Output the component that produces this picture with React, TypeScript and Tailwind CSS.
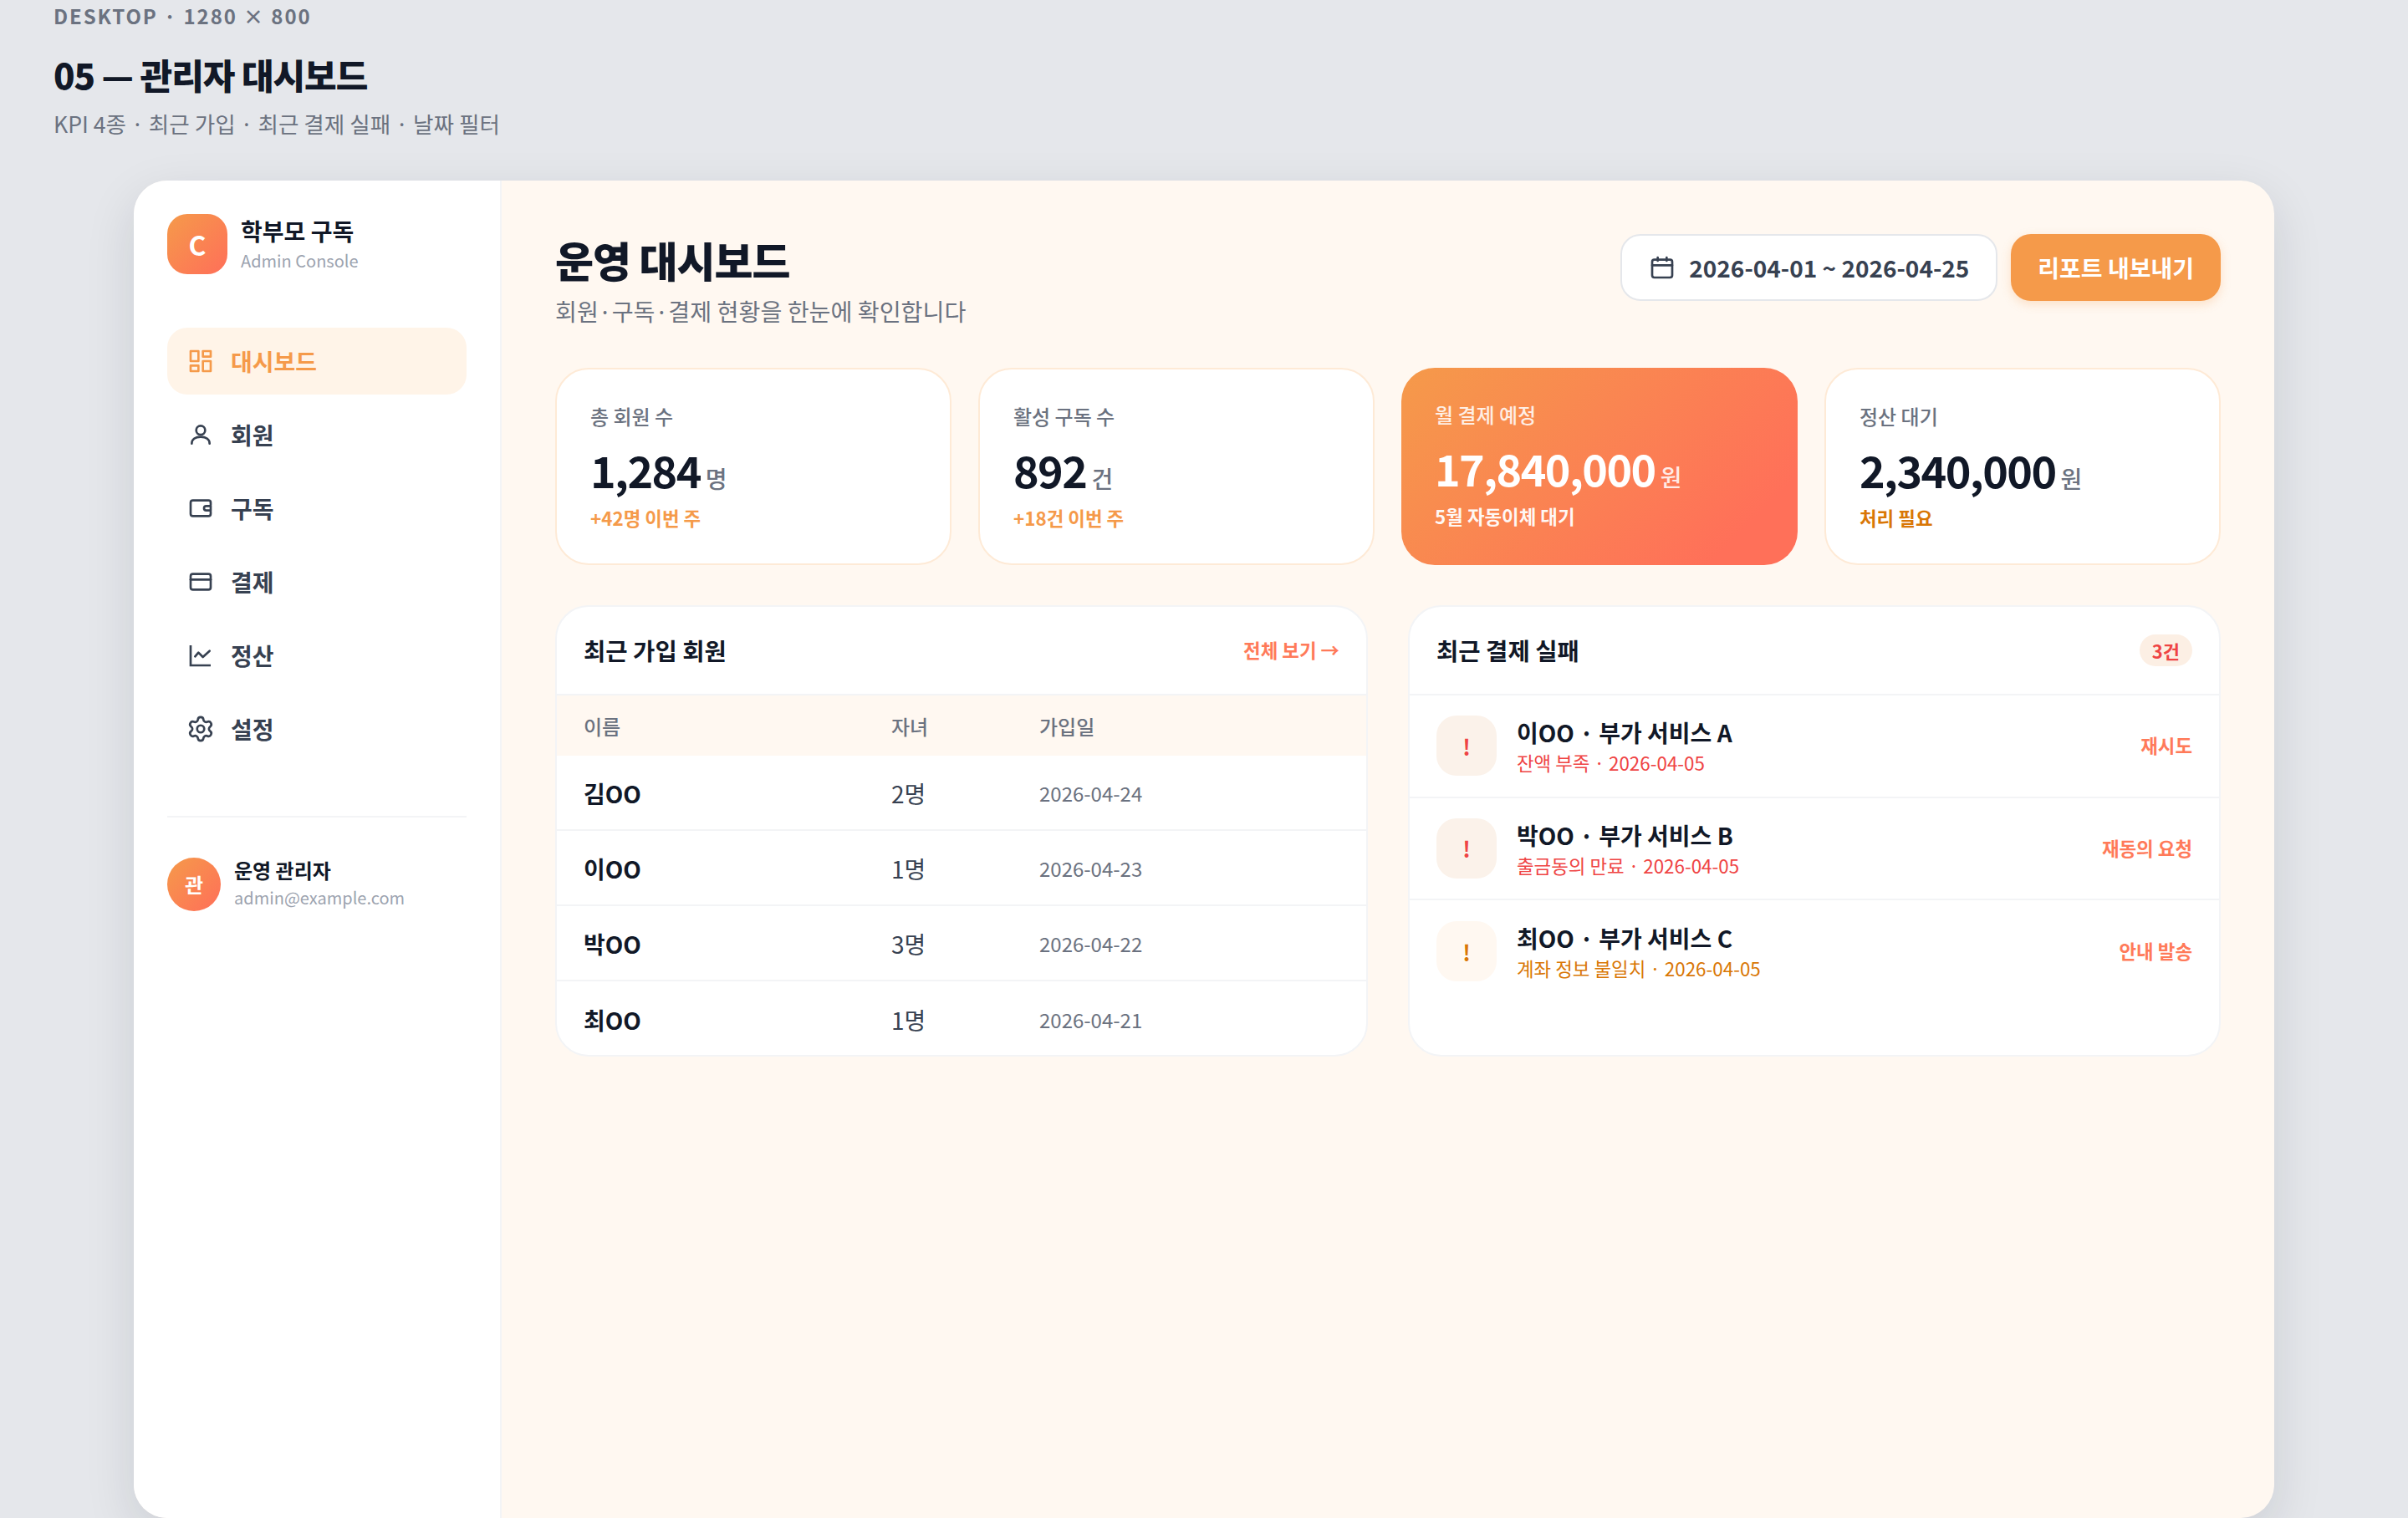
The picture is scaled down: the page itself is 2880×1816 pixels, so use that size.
import { Settings } from 'lucide-react';

const SW = 2;

function IconBase({ children, className = '' }: { children: React.ReactNode; className?: string }) {
  return (
    <svg
      viewBox="0 0 24 24"
      fill="none"
      stroke="currentColor"
      strokeWidth={SW}
      strokeLinecap="round"
      strokeLinejoin="round"
      className={`h-8 w-8 shrink-0 ${className}`}
    >
      {children}
    </svg>
  );
}

const DashboardIcon = () => (
  <IconBase>
    <rect x="3" y="3" width="7" height="9" />
    <rect x="14" y="3" width="7" height="5" />
    <rect x="14" y="12" width="7" height="9" />
    <rect x="3" y="16" width="7" height="5" />
  </IconBase>
);

const UserIcon = () => (
  <IconBase>
    <circle cx="12" cy="8" r="4" />
    <path d="M4 20c0-4 3.6-6 8-6s8 2 8 6" />
  </IconBase>
);

const WalletIcon = () => (
  <IconBase>
    <path d="M21 9V7a2 2 0 0 0-2-2H5a2 2 0 0 0-2 2v10a2 2 0 0 0 2 2h14a2 2 0 0 0 2-2v-2" />
    <path d="M21 10h-4a2 2 0 0 0 0 4h4z" />
  </IconBase>
);

const CardIcon = () => (
  <IconBase>
    <rect x="3" y="5" width="18" height="14" rx="2" />
    <path d="M3 10h18" />
  </IconBase>
);

const ChartIcon = () => (
  <IconBase>
    <path d="M3 3v18h18" strokeLinecap="butt" strokeLinejoin="miter" />
    <path d="M7 13l3-3.5 4 4 6-5.5" />
  </IconBase>
);

const CalendarIcon = () => (
  <IconBase className="text-[#374151]">
    <rect x="3" y="5" width="18" height="16" rx="2" />
    <path d="M3 10h18M8 3v3M16 3v3" />
  </IconBase>
);

const navItems = [
  { label: '대시보드', icon: <DashboardIcon />, active: true },
  { label: '회원', icon: <UserIcon /> },
  { label: '구독', icon: <WalletIcon /> },
  { label: '결제', icon: <CardIcon /> },
  { label: '정산', icon: <ChartIcon /> },
  { label: '설정', icon: <Settings size={34} strokeWidth={1.9} className="-mx-px shrink-0" /> },
];

const kpis = [
  { label: '총 회원 수', value: '1,284', unit: '명', note: '+42명 이번 주', noteColor: 'text-[#f59a4a]' },
  { label: '활성 구독 수', value: '892', unit: '건', note: '+18건 이번 주', noteColor: 'text-[#f59a4a]' },
  { label: '월 결제 예정', value: '17,840,000', unit: '원', note: '5월 자동이체 대기', highlight: true },
  { label: '정산 대기', value: '2,340,000', unit: '원', note: '처리 필요', noteColor: 'text-[#d97706]' },
];

const members = [
  { name: '김OO', kids: '2명', date: '2026-04-24' },
  { name: '이OO', kids: '1명', date: '2026-04-23' },
  { name: '박OO', kids: '3명', date: '2026-04-22' },
  { name: '최OO', kids: '1명', date: '2026-04-21' },
];

const failures = [
  { title: '이OO · 부가 서비스 A', reason: '잔액 부족 · 2026-04-05', action: '재시도', tone: 'text-[#ef4444]', iconBg: 'bg-[#fbf2ea]' },
  { title: '박OO · 부가 서비스 B', reason: '출금동의 만료 · 2026-04-05', action: '재동의 요청', tone: 'text-[#ef4444]', iconBg: 'bg-[#fbf2ea]' },
  { title: '최OO · 부가 서비스 C', reason: '계좌 정보 불일치 · 2026-04-05', action: '안내 발송', tone: 'text-[#d97706]', iconBg: 'bg-[#fff8f1]' },
];

function Sidebar() {
  return (
    <aside className="flex w-[440px] shrink-0 flex-col border-r-2 border-[#f3f4f6] bg-white px-10 pt-10">
      <div className="flex items-center gap-4">
        <div className="flex h-[72px] w-[72px] items-center justify-center rounded-[24px] bg-[linear-gradient(135deg,#f59a4a,#ff6f59)] text-[32px] font-bold text-white">
          C
        </div>
        <div>
          <div className="mb-1 text-[28px] leading-[36px] font-bold text-[#111827]">학부모 구독</div>
          <div className="text-[20px] leading-[28px] text-[#9ca3af]">Admin Console</div>
        </div>
      </div>

      <nav className="mt-16 flex flex-col gap-2">
        {navItems.map((item) => (
          <div
            key={item.label}
            className={`flex h-20 items-center gap-5 rounded-[24px] px-6 text-[28px] font-semibold ${
              item.active ? 'bg-[#fff4e8] text-[#f59a4a]' : 'text-[#374151]'
            }`}
          >
            {item.icon}
            {item.label}
          </div>
        ))}
      </nav>

      <div className="mt-16 flex items-center gap-4 border-t-2 border-[#f3f4f6] pt-12">
        <div className="flex h-16 w-16 items-center justify-center rounded-full bg-[linear-gradient(135deg,#f59a4a,#ff6f59)] text-[24px] font-bold text-white">
          관
        </div>
        <div>
          <div className="mb-1 text-[24px] leading-[28px] font-semibold text-[#111827]">운영 관리자</div>
          <div className="text-[20px] leading-[30px] text-[#9ca3af]">admin@example.com</div>
        </div>
      </div>
    </aside>
  );
}

function KpiCard({ kpi }: { kpi: (typeof kpis)[number] }) {
  const hi = kpi.highlight;
  return (
    <div
      className={`h-[236px] rounded-[40px] px-10 pt-[38px] ${
        hi ? 'bg-[linear-gradient(135deg,#f59a4a,#ff7059_85%)]' : 'border-2 border-[#feead6] bg-white'
      }`}
    >
      <div className={`text-[24px] leading-[36px] font-medium ${hi ? 'text-white/85' : 'text-[#6b7280]'}`}>{kpi.label}</div>
      <div className="mt-[10px] flex items-baseline gap-[6px]">
        <span className={`text-[52px] leading-[72px] font-bold tracking-[-0.03em] ${hi ? 'text-white' : 'text-[#111827]'}`}>{kpi.value}</span>
        <span className={`text-[28px] font-medium ${hi ? 'text-white/85' : 'text-[#6b7280]'}`}>{kpi.unit}</span>
      </div>
      <div className={`mt-1 text-[22.4px] leading-[34px] font-semibold ${hi ? 'text-white/95' : kpi.noteColor}`}>{kpi.note}</div>
    </div>
  );
}

function MembersCard() {
  return (
    <section className="h-[540px] overflow-hidden rounded-[40px] border-2 border-[#f3f4f6] bg-white">
      <header className="flex h-[106px] items-center justify-between border-b-2 border-[#f3f4f6] px-8">
        <h2 className="text-[28.6px] font-bold text-[#111827]">최근 가입 회원</h2>
        <a className="text-[22.4px] font-semibold text-[#ff7a59]">전체 보기 →</a>
      </header>
      <div className="grid h-[72px] grid-cols-[368px_177px_1fr] items-center bg-[#fff8f1] pt-[2px] text-[24px] font-medium text-[#6b7280]">
        <div className="px-8">이름</div>
        <div className="px-8">자녀</div>
        <div className="px-8">가입일</div>
      </div>
      {members.map((m) => (
        <div key={m.name} className="grid h-[90px] grid-cols-[368px_177px_1fr] items-center border-b-2 border-[#f3f4f6] pt-[2px] last:border-b-0">
          <div className="px-8 text-[28px] font-semibold text-[#111827]">{m.name}</div>
          <div className="px-8 text-[28px] text-[#374151]">{m.kids}</div>
          <div className="px-8 text-[24px] text-[#6b7280]">{m.date}</div>
        </div>
      ))}
    </section>
  );
}

function FailuresCard() {
  return (
    <section className="h-[540px] overflow-hidden rounded-[40px] border-2 border-[#f3f4f6] bg-white">
      <header className="flex h-[106px] items-center justify-between border-b-2 border-[#f3f4f6] px-8">
        <h2 className="text-[28.6px] font-bold text-[#111827]">최근 결제 실패</h2>
        <span className="flex h-[38px] items-center rounded-full bg-[#fcefe4] px-[15px] text-[22px] font-bold text-[#ef4444]">3건</span>
      </header>
      {failures.map((f) => (
        <div key={f.title} className="flex h-[122.5px] items-center gap-6 border-b-2 border-[#f3f4f6] px-8 last:border-b-0">
          <div className={`flex h-[72px] w-[72px] shrink-0 items-center justify-center rounded-[24px] text-[26px] font-bold ${f.iconBg} ${f.tone}`}>!</div>
          <div className="min-w-0 flex-1">
            <div className="text-[28px] leading-[40px] font-semibold text-[#111827]">{f.title}</div>
            <div className={`text-[22.4px] leading-[32px] ${f.tone}`}>{f.reason}</div>
          </div>
          <a className="text-[22.4px] font-semibold text-[#ff7a59]">{f.action}</a>
        </div>
      ))}
    </section>
  );
}

export default function App() {
  return (
    <div className="h-[1816px] overflow-hidden bg-[#e5e7eb] font-['Noto_Sans_CJK_KR','Noto_Sans',sans-serif]">
      <div className="pl-16">
        <div className="text-[24px] leading-[38px] font-semibold tracking-[1.9px] text-[#6b7280]">DESKTOP · 1280 × 800</div>
        <h1 className="mt-[22px] text-[42px] leading-[58px] font-extrabold tracking-[-0.025em] text-[#111827]">05 — 관리자 대시보드</h1>
        <p className="mt-[10px] text-[26.6px] leading-[40px] text-[#6b7280]">KPI 4종 · 최근 가입 · 최근 결제 실패 · 날짜 필터</p>
      </div>

      <div className="mx-auto mt-12 flex h-[1600px] w-[2560px] overflow-hidden rounded-[40px] bg-[#fff8f1] shadow-[0_20px_60px_rgba(17,24,39,0.12)]">
        <Sidebar />
        <main className="min-w-0 flex-1 px-16 pt-16">
          <div className="flex items-start justify-between">
            <div>
              <h2 className="mt-[-6px] mb-[6px] text-[50px] leading-[72px] font-extrabold tracking-[-0.02em] text-[#111827]">운영 대시보드</h2>
              <p className="text-[28.2px] leading-[40px] text-[#6b7280]">회원·구독·결제 현황을 한눈에 확인합니다</p>
            </div>
            <div className="flex items-center gap-4">
              <div className="flex h-20 items-center gap-4 rounded-[24px] border-2 border-[#e5e7eb] bg-white px-8 text-[28px] font-semibold text-[#374151]">
                <CalendarIcon />
                2026-04-01 ~ 2026-04-25
              </div>
              <button className="h-20 rounded-[24px] bg-[#f59a4a] px-8 text-[28px] font-bold text-white shadow-[0_4px_12px_rgba(245,154,74,0.25)]">
                리포트 내보내기
              </button>
            </div>
          </div>

          <div className="mt-12 grid grid-cols-4 gap-8">
            {kpis.map((kpi) => (
              <KpiCard key={kpi.label} kpi={kpi} />
            ))}
          </div>

          <div className="mt-12 grid grid-cols-2 gap-12">
            <MembersCard />
            <FailuresCard />
          </div>
        </main>
      </div>
    </div>
  );
}
